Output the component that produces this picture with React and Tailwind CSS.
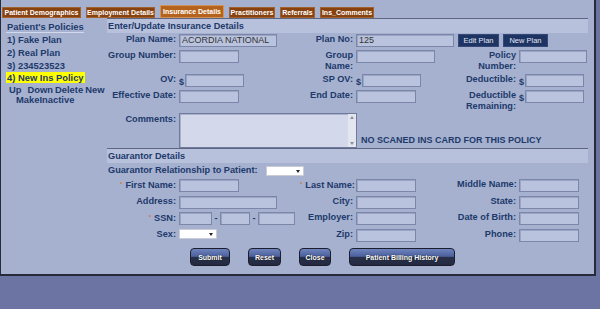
const TABS = [
  { label: 'Patient Demographics', w: 'w-[79px]' },
  { label: 'Employment Details', w: 'w-[69px]' },
  { label: 'Insurance Details', w: 'w-[64px]', active: true },
  { label: 'Practitioners', w: 'w-[46px]' },
  { label: 'Referrals', w: 'w-[35px]' },
  { label: 'Ins_Comments', w: 'w-[54px]' },
]

const POLICIES = ['1) Fake Plan', '2) Real Plan', '3) 234523523']

function Label({ children, req }) {
  return (
    <div className="pt-[1px] pr-[3px] text-right leading-[11px] whitespace-nowrap">
      {req && <span className="mr-[3px] align-[2px] text-[6px] text-[#d9782a]">*</span>}
      {children}
    </div>
  )
}

function Field({ w = 'w-[60px]', children }) {
  return (
    <div className={`my-[1px] h-[13px] ${w} border border-[#7b86a9] bg-[#bac3de] shadow-[inset_1px_1px_0_#9aa4c4] px-[2px] text-[9px] leading-[11px] font-normal text-[#333]`}>
      {children}
    </div>
  )
}

function Money({ w = 'w-[59px]' }) {
  return (
    <div className="flex items-end">
      <span className="w-[6px] leading-[11px] text-[9px]">$</span>
      <Field w={w} />
    </div>
  )
}

function Select({ w }) {
  return (
    <div className={`relative ${w} h-[10px] bg-white border border-[#c9ccd6]`}>
      <svg className="absolute right-[3px] top-[3px]" width="4" height="3" viewBox="0 0 4 3">
        <path d="M0 0h4L2 3z" fill="#222" />
      </svg>
    </div>
  )
}

function NavBtn({ w, children }) {
  return (
    <button className={`${w} h-[18px] rounded-[4px] border border-[#1b1f2d] bg-[linear-gradient(to_bottom,#6f84bd_0%,#4b609c_46%,#283049_52%,#232a40_100%)] text-[7px] font-bold text-white leading-none [text-shadow:0_0_1px_#000]`}>
      {children}
    </button>
  )
}

function SmallBtn({ w, children }) {
  return (
    <button className={`${w} my-[1px] h-[13px] bg-[#1e3463] border border-[#34487a] text-[7.5px] font-normal text-[#e1e6f4] leading-none`}>
      {children}
    </button>
  )
}

export default function App() {
  return (
    <div className="h-screen bg-[#6b74a3] font-['Liberation_Sans',Arial,sans-serif] text-[#1d3a6b] font-bold">
      <div className="h-[276px] w-[596px] border-l border-r-2 border-b-2 border-[#262a3a] bg-[#a6b1d0] flex flex-col">
        {/* Tabs */}
        <div className="h-[18px] flex items-end gap-[5px] pl-[1px]">
          {TABS.map(t => (
            <div
              key={t.label}
              className={`${t.w} text-center text-[7px] text-white whitespace-nowrap border ${
                t.active
                  ? 'h-[13px] leading-[12px] bg-[#b4621c] border-[#cf925a]'
                  : 'h-[11px] leading-[10px] bg-[#874210] border-[#a2602c]'
              }`}
            >
              {t.label}
            </div>
          ))}
        </div>

        <div className="flex flex-1">
          {/* Sidebar */}
          <div className="w-[106px] pl-[5px] pt-[2px] text-[9.4px]">
            <div className="inline-block border-b border-[#d3d9ec] leading-[11px] pl-[1px]">Patient's Policies</div>
            {POLICIES.map(p => (
              <div key={p} className="leading-[12.7px] pl-[1px]">{p}</div>
            ))}
            <div className="leading-[12.7px]">
              <span className="bg-[#ffff00] px-[1px]">4) New Ins Policy</span>
            </div>
            <div className="leading-[10.5px] pl-[3px] whitespace-nowrap">
              <span>Up</span>
              <span className="ml-[6px]">Down</span>
              <span className="ml-[2px]">Delete</span>
              <span className="ml-[2px]">New</span>
            </div>
            <div className="leading-[10.5px] pl-[10px]">MakeInactive</div>
          </div>

          {/* Main */}
          <div className="flex-1 pr-[6px] text-[9.2px]">
            <div className="border-t border-[#5d6684] bg-[#b8c1dc] h-[15px] leading-[14px] pl-[1px]">
              Enter/Update Insurance Details
            </div>

            <div className="grid grid-cols-[72px_121px_56px_101px_62px_69px] gap-y-[1px] items-start">
              <Label>Plan Name:</Label>
              <div><Field w="w-[98px]">ACORDIA NATIONAL</Field></div>
              <Label>Plan No:</Label>
              <div className="col-span-3 flex gap-[4px]">
                <Field w="w-[98px]">125</Field>
                <SmallBtn w="w-[41px]">Edit Plan</SmallBtn>
                <SmallBtn w="w-[45px]">New Plan</SmallBtn>
              </div>

              <Label>Group Number:</Label>
              <Field w="w-[60px]" />
              <Label>Group<br />Name:</Label>
              <Field w="w-[79px]" />
              <Label>Policy<br />Number:</Label>
              <Field w="w-[68px]" />

              <Label>OV:</Label>
              <Money />
              <Label>SP OV:</Label>
              <Money />
              <Label>Deductible:</Label>
              <Money />

              <Label>Effective Date:</Label>
              <Field w="w-[60px]" />
              <Label>End Date:</Label>
              <Field w="w-[60px]" />
              <Label>Deductible<br />Remaining:</Label>
              <Money />

              <Label>Comments:</Label>
              <div className="col-span-5 flex items-end">
                <div className="w-[178px] h-[35px] flex border border-[#6f7a9c] bg-[#d3d9eb] shadow-[inset_1px_1px_0_#a9b1cc]">
                  <div className="flex-1" />
                  <div className="w-[8px] bg-[#e3e6ef] flex flex-col justify-between items-center py-[2px]">
                    <svg width="4" height="3" viewBox="0 0 4 3"><path d="M0 3h4L2 0z" fill="#8a8f9e" /></svg>
                    <svg width="4" height="3" viewBox="0 0 4 3"><path d="M0 0h4L2 3z" fill="#8a8f9e" /></svg>
                  </div>
                </div>
                <span className="ml-[4px] mb-[2px] leading-[11px] text-[9px] whitespace-nowrap">
                  NO SCANED INS CARD FOR THIS POLICY
                </span>
              </div>
            </div>

            {/* Guarantor */}
            <div className="border-t border-[#5d6684] bg-[#b8c1dc] h-[15px] leading-[14px] pl-[1px]">
              Guarantor Details
            </div>
            <div className="mt-[2px] h-[12px] flex items-center pl-[1px]">
              <span>Guarantor Relationship to Patient:</span>
              <div className="ml-[8px]"><Select w="w-[38px]" /></div>
            </div>

            <div className="mt-[1px] grid grid-cols-[72px_121px_56px_101px_62px_69px] gap-y-[1.5px] items-start">
              <Label req>First Name:</Label>
              <Field w="w-[60px]" />
              <Label req>Last Name:</Label>
              <Field w="w-[60px]" />
              <Label>Middle Name:</Label>
              <Field w="w-[60px]" />

              <Label>Address:</Label>
              <Field w="w-[98px]" />
              <Label>City:</Label>
              <Field w="w-[60px]" />
              <Label>State:</Label>
              <Field w="w-[60px]" />

              <Label req>SSN:</Label>
              <div className="flex items-center">
                <Field w="w-[33px]" />
                <span className="w-[8px] text-center">-</span>
                <Field w="w-[30px]" />
                <span className="w-[8px] text-center">-</span>
                <Field w="w-[37px]" />
              </div>
              <Label>Employer:</Label>
              <Field w="w-[60px]" />
              <Label>Date of Birth:</Label>
              <Field w="w-[60px]" />

              <Label>Sex:</Label>
              <div className="my-[1px]"><Select w="w-[38px]" /></div>
              <Label>Zip:</Label>
              <Field w="w-[60px]" />
              <Label>Phone:</Label>
              <Field w="w-[60px]" />
            </div>

            <div className="mt-[5.5px] ml-[83px] flex gap-[18px]">
              <NavBtn w="w-[40px]">Submit</NavBtn>
              <NavBtn w="w-[33px]">Reset</NavBtn>
              <NavBtn w="w-[32px]">Close</NavBtn>
              <NavBtn w="w-[106px]">Patient Billing History</NavBtn>
            </div>
          </div>
        </div>
      </div>
    </div>
  )
}
